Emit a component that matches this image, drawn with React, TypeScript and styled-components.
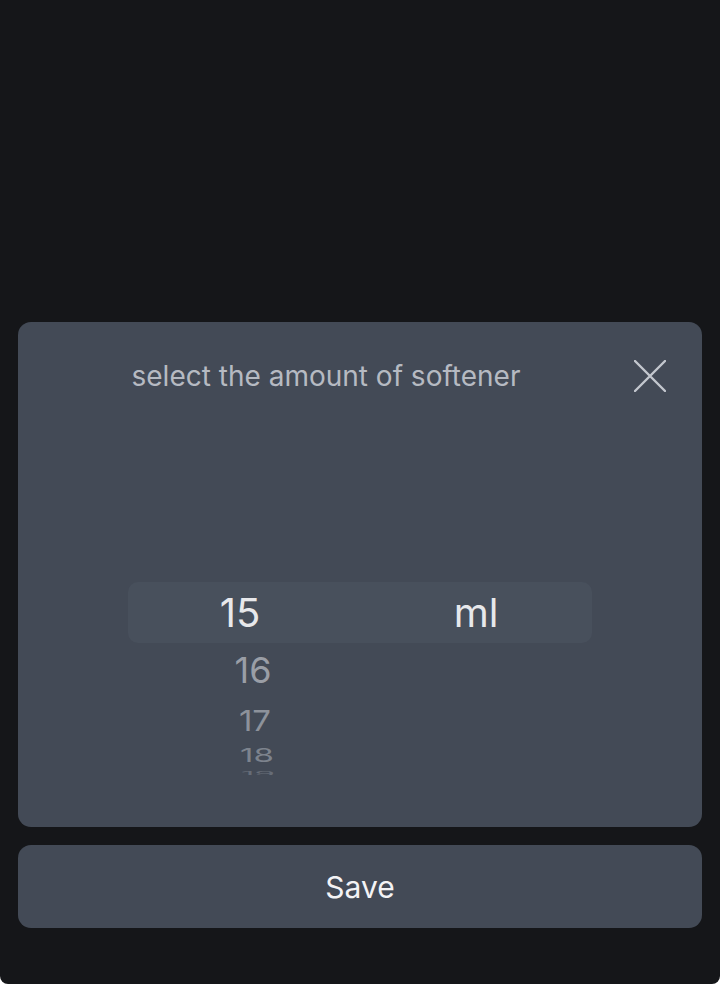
import { createGlobalStyle } from "styled-components";
import styled from "styled-components";

const GlobalStyle = createGlobalStyle`
  html, body {
    margin: 0;
    padding: 0;
    background: #ffffff;
  }
  * {
    box-sizing: border-box;
  }
`;

const wheelRows = [
  { value: 16, size: 36, scale: 1, shift: 9, height: 54, color: "#9a9ea6" },
  { value: 17, size: 33, scale: 0.88, shift: 11, height: 46, color: "#8d929b" },
  { value: 18, size: 33, scale: 0.57, shift: 13, height: 24, color: "#7d838d" },
  { value: 19, size: 33, scale: 0.2, shift: 14, height: 12, color: "#666c77" },
];

const App = () => {
  return (
    <>
      <GlobalStyle />
      <Screen>
        <Sheet>
          <Header>
            <Title>select the amount of softener</Title>
            <CloseButton aria-label="close">
              <svg width="32" height="32" viewBox="0 0 32 32">
                <path
                  d="M1 1 L31 31 M31 1 L1 31"
                  stroke="#c3c7ce"
                  strokeWidth="2.4"
                  strokeLinecap="round"
                />
              </svg>
            </CloseButton>
          </Header>

          <Picker>
            <SelectedRow>
              <SelectedValue $shift={-4}>15</SelectedValue>
              <SelectedValue $shift={0}>ml</SelectedValue>
            </SelectedRow>
            {wheelRows.map((row) => (
              <WheelRow key={row.value} $height={row.height}>
                <WheelValue
                  $size={row.size}
                  $color={row.color}
                  style={{
                    transform: `translateX(${row.shift}px) scaleY(${row.scale})`,
                  }}
                >
                  {row.value}
                </WheelValue>
              </WheelRow>
            ))}
          </Picker>
        </Sheet>

        <SaveButton>Save</SaveButton>
      </Screen>
    </>
  );
};

const Screen = styled.div`
  width: 720px;
  height: 984px;
  background: #151619;
  border-radius: 0 0 8px 8px;
  display: flex;
  flex-direction: column;
  justify-content: flex-end;
  gap: 18px;
  padding: 0 18px 56px;
  font-family: Inter, "Noto Sans", sans-serif;
`;

const Sheet = styled.section`
  height: 505px;
  background: #434a56;
  border-radius: 13px;
  display: flex;
  flex-direction: column;
  overflow: hidden;
`;

const Header = styled.div`
  display: flex;
  align-items: center;
  height: 60px;
  margin-top: 24px;
  padding-right: 36px;
`;

const Title = styled.h2`
  flex: 1;
  margin: 0;
  text-align: center;
  font-size: 28px;
  font-weight: 400;
  letter-spacing: 0;
  color: #b6bac2;
`;

const CloseButton = styled.button`
  width: 32px;
  height: 32px;
  padding: 0;
  border: none;
  background: none;
  display: flex;
  align-items: center;
  justify-content: center;
`;

const Picker = styled.div`
  width: 464px;
  margin: 176px auto 0;
  display: flex;
  flex-direction: column;
  height: 193px;
  overflow: hidden;
`;

const SelectedRow = styled.div`
  display: grid;
  grid-template-columns: 1fr 1fr;
  align-items: center;
  height: 61px;
  flex-shrink: 0;
  background: #48505c;
  border-radius: 10px;
`;

const SelectedValue = styled.span<{ $shift: number }>`
  text-align: center;
  font-size: 40px;
  font-weight: 400;
  color: #e7e8eb;
  transform: translateX(${(p) => p.$shift}px);
`;

const WheelRow = styled.div<{ $height: number }>`
  width: 50%;
  height: ${(p) => p.$height}px;
  flex-shrink: 0;
  display: flex;
  align-items: center;
  justify-content: center;
`;

const WheelValue = styled.span<{ $size: number; $color: string }>`
  display: block;
  font-size: ${(p) => p.$size}px;
  line-height: 1;
  color: ${(p) => p.$color};
`;

const SaveButton = styled.button`
  height: 83px;
  flex-shrink: 0;
  border: none;
  border-radius: 13px;
  background: #434a56;
  color: #f3f3f5;
  font-family: Inter, "Noto Sans", sans-serif;
  font-size: 30px;
  font-weight: 400;
`;

export default App;
